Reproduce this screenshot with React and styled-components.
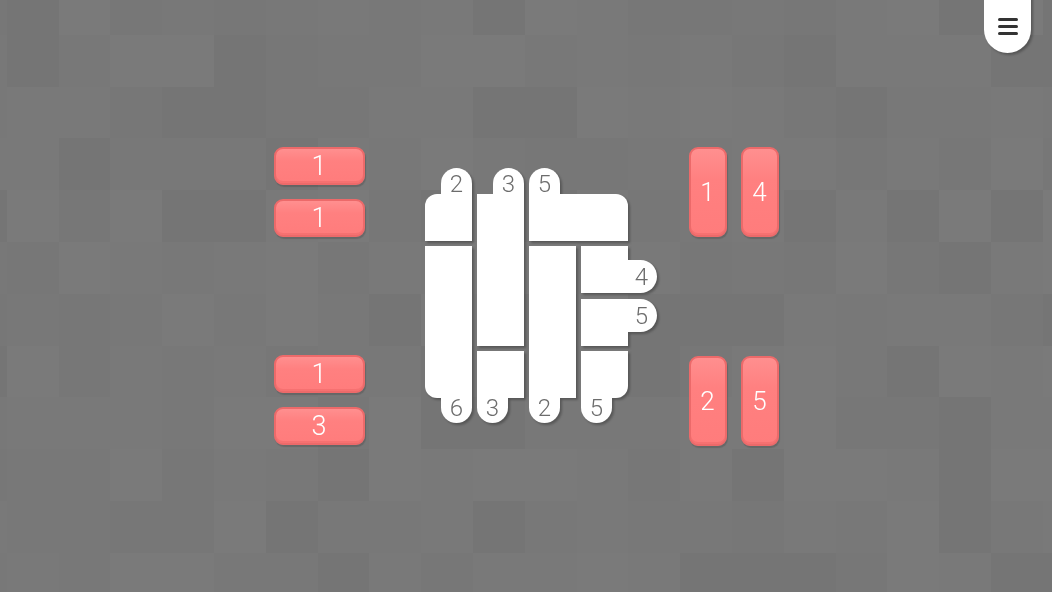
import React from "react";
import styled, { createGlobalStyle } from "styled-components";

const GlobalStyle = createGlobalStyle`
  html, body {
    margin: 0;
    padding: 0;
    width: 100%;
    height: 100%;
    overflow: hidden;
    background: #787878;
    font-family: Roboto, "Noto Sans", "Liberation Sans", sans-serif;
  }
  #root { height: 100%; }
`;

/* ---------- background checker ---------- */
const Checker = styled.div`
  position: fixed;
  top: -17px;
  left: -45px;
  display: grid;
  grid-template-columns: repeat(22, 51.8px);
  grid-auto-rows: 51.8px;
  z-index: 0;
`;

const CheckCell = styled.div`
  background: ${(p) => p.$shade};
`;

const SHADES = ["#757575", "#777777", "#787878", "#797979", "#7a7a7a"];
function makeCells() {
  let s = 98765;
  const out = [];
  for (let i = 0; i < 22 * 14; i++) {
    s = (s * 1103515245 + 12345) & 0x7fffffff;
    out.push(SHADES[(s >> 9) % SHADES.length]);
  }
  return out;
}
const CELLS = makeCells();

/* ---------- layout ---------- */
const Stage = styled.main`
  position: relative;
  z-index: 1;
  height: 100%;
  display: flex;
  align-items: center;
  justify-content: center;
  gap: 60.5px;
`;

const LeftColumn = styled.div`
  display: grid;
  grid-template-columns: 91px;
  grid-template-rows: repeat(6, 38px);
  row-gap: 14px;
`;

const RightColumn = styled.div`
  display: flex;
  flex-direction: column;
  gap: 119px;
`;

const Pair = styled.div`
  display: flex;
  gap: 14px;
`;

const Tile = styled.div`
  box-sizing: border-box;
  width: ${(p) => (p.$vertical ? "38px" : "91px")};
  height: ${(p) => (p.$vertical ? "90px" : "38px")};
  grid-row: ${(p) => p.$row || "auto"};
  border: 2px solid #ec6a6a;
  border-radius: 9px;
  background: linear-gradient(180deg, #ff8f8f 0%, #ff8080 35%, #ff7c7c 100%);
  box-shadow: 1px 2px 1px rgba(0, 0, 0, 0.15), inset 0 -2px 0 rgba(230, 95, 95, 0.35);
  display: flex;
  align-items: center;
  justify-content: center;
  color: #ffffff;
  font-size: ${(p) => (p.$vertical ? "26px" : "27px")};
  font-weight: 300;
  line-height: 1;
`;

/* ---------- board ---------- */
const Board = styled.div`
  display: grid;
  grid-template-columns: repeat(4, 47px);
  grid-template-rows: repeat(4, 47px);
  gap: 5.3px 5px;
`;

const Piece = styled.div`
  position: relative;
  grid-column: ${(p) => p.$col} / span ${(p) => p.$cs || 1};
  grid-row: ${(p) => p.$row} / span ${(p) => p.$rs || 1};
  background: #ffffff;
  border-radius: ${(p) => p.$radius || "0"};
  filter: drop-shadow(2px 2px 0.8px rgba(40, 40, 40, 0.4));
`;

const Tab = styled.div`
  position: absolute;
  background: #ffffff;
  color: #6c6c6c;
  font-size: 24px;
  font-weight: 300;
  line-height: 1;
  display: flex;
  justify-content: center;
  box-sizing: border-box;

  ${(p) =>
    p.$side === "top" &&
    `
    top: -26px;
    width: 31px;
    height: 32px;
    ${p.$align === "start" ? "left: 0;" : "right: 0;"}
    border-radius: 15.5px 15.5px 0 0;
    align-items: flex-start;
    padding-top: 4px;
  `}

  ${(p) =>
    p.$side === "bottom" &&
    `
    bottom: -25px;
    width: 31px;
    height: 32px;
    ${p.$align === "start" ? "left: 0;" : "right: 0;"}
    border-radius: 0 0 15.5px 15.5px;
    align-items: flex-end;
    padding-bottom: 3px;
  `}

  ${(p) =>
    p.$side === "right" &&
    `
    right: -29px;
    width: 35px;
    height: 33px;
    ${p.$align === "start" ? "top: 0;" : "bottom: 0;"}
    border-radius: 0 16.5px 16.5px 0;
    align-items: center;
    justify-content: flex-end;
    padding-right: 9px;
    padding-top: 1px;
  `}
`;

/* ---------- menu ---------- */
const MenuButton = styled.button`
  position: fixed;
  top: -20px;
  right: 21px;
  z-index: 2;
  width: 47px;
  height: 73px;
  padding: 20px 0 0 0;
  border: none;
  border-radius: 0 0 23.5px 23.5px;
  background: #ffffff;
  filter: drop-shadow(2px 2px 0.8px rgba(40, 40, 40, 0.4));
  display: flex;
  align-items: flex-start;
  justify-content: center;
  cursor: pointer;
`;

const Burger = styled.span`
  margin-top: 18px;
  display: flex;
  flex-direction: column;
  gap: 4px;
`;

const BurgerBar = styled.span`
  display: block;
  width: 20px;
  height: 3px;
  border-radius: 2px;
  background: #333333;
`;

const pieces = [
  { col: 1, row: 1, radius: "12px 0 0 0", tab: { side: "top", align: "end", n: 2 } },
  { col: 2, row: 1, rs: 3, tab: { side: "top", align: "end", n: 3 } },
  { col: 3, row: 1, cs: 2, radius: "0 12px 0 0", tab: { side: "top", align: "start", n: 5 } },
  { col: 1, row: 2, rs: 3, radius: "0 0 0 12px", tab: { side: "bottom", align: "end", n: 6 } },
  { col: 2, row: 4, tab: { side: "bottom", align: "start", n: 3 } },
  { col: 3, row: 2, rs: 3, tab: { side: "bottom", align: "start", n: 2 } },
  { col: 4, row: 2, tab: { side: "right", align: "end", n: 4 } },
  { col: 4, row: 3, tab: { side: "right", align: "start", n: 5 } },
  { col: 4, row: 4, radius: "0 0 12px 0", tab: { side: "bottom", align: "start", n: 5 } },
];

export default function App() {
  return (
    <>
      <GlobalStyle />
      <Checker aria-hidden="true">
        {CELLS.map((c, i) => (
          <CheckCell key={i} $shade={c} />
        ))}
      </Checker>

      <MenuButton aria-label="menu">
        <Burger>
          <BurgerBar />
          <BurgerBar />
          <BurgerBar />
        </Burger>
      </MenuButton>

      <Stage>
        <LeftColumn>
          <Tile $row={1}>1</Tile>
          <Tile $row={2}>1</Tile>
          <Tile $row={5}>1</Tile>
          <Tile $row={6}>3</Tile>
        </LeftColumn>

        <Board>
          {pieces.map((p, i) => (
            <Piece key={i} $col={p.col} $row={p.row} $cs={p.cs} $rs={p.rs} $radius={p.radius}>
              <Tab $side={p.tab.side} $align={p.tab.align}>
                {p.tab.n}
              </Tab>
            </Piece>
          ))}
        </Board>

        <RightColumn>
          <Pair>
            <Tile $vertical>1</Tile>
            <Tile $vertical>4</Tile>
          </Pair>
          <Pair>
            <Tile $vertical>2</Tile>
            <Tile $vertical>5</Tile>
          </Pair>
        </RightColumn>
      </Stage>
    </>
  );
}
